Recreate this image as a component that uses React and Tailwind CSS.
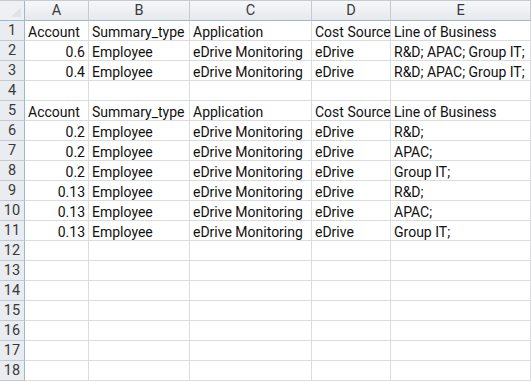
import React from 'react';

const cols = ['A', 'B', 'C', 'D', 'E'];

const header = ['Account', 'Summary_type', 'Application', 'Cost Source', 'Line of Business'];

const rows = [
  header,
  ['0.6', 'Employee', 'eDrive Monitoring', 'eDrive', 'R&D; APAC; Group IT;'],
  ['0.4', 'Employee', 'eDrive Monitoring', 'eDrive', 'R&D; APAC; Group IT;'],
  [],
  header,
  ['0.2', 'Employee', 'eDrive Monitoring', 'eDrive', 'R&D;'],
  ['0.2', 'Employee', 'eDrive Monitoring', 'eDrive', 'APAC;'],
  ['0.2', 'Employee', 'eDrive Monitoring', 'eDrive', 'Group IT;'],
  ['0.13', 'Employee', 'eDrive Monitoring', 'eDrive', 'R&D;'],
  ['0.13', 'Employee', 'eDrive Monitoring', 'eDrive', 'APAC;'],
  ['0.13', 'Employee', 'eDrive Monitoring', 'eDrive', 'Group IT;'],
  [], [], [], [], [], [], [],
];

export default function App() {
  return (
    <div className="w-[531px] h-[382px] overflow-hidden bg-white font-['Roboto','Liberation_Sans',sans-serif] text-[14px] text-[#111]">
      <div className="grid grid-cols-[25px_64px_101px_122px_79px_1fr] auto-rows-[20px] border-t border-[#c6cbd2]">
        {/* column header row */}
        <div className="h-[20px] bg-[#eef0f3] border-r border-b border-[#9eb6ce] relative">
          <div className="absolute right-[3px] bottom-[3px] w-0 h-0 border-l-[10px] border-l-transparent border-b-[10px] border-b-[#dfe3e8]" />
        </div>
        {cols.map((c) => (
          <div key={c} className="h-[20px] flex items-center justify-center bg-gradient-to-b from-[#f6f7f9] to-[#e6e9ed] border-r border-b border-[#c6cbd2] border-b-[#9eb6ce] text-[#3a3a3a] text-[14.5px]">
            {c}
          </div>
        ))}

        {rows.map((r, i) => (
          <React.Fragment key={i}>
            <div className="flex items-center justify-center bg-[#e9ecf0] border-r border-b border-[#c6cbd2] border-r-[#9eb6ce] text-[#3a3a3a] text-[14.5px]">
              {i + 1}
            </div>
            {cols.map((c, j) => {
              const v = r[j] || '';
              const num = j === 0 && v !== '' && !isNaN(Number(v));
              return (
                <div
                  key={c}
                  className={`flex items-end leading-[16px] px-[3px] whitespace-nowrap overflow-visible border-r border-b border-[#dadcdd] ${num ? 'justify-end' : 'justify-start'}`}
                >
                  {v}
                </div>
              );
            })}
          </React.Fragment>
        ))}
      </div>
    </div>
  );
}
